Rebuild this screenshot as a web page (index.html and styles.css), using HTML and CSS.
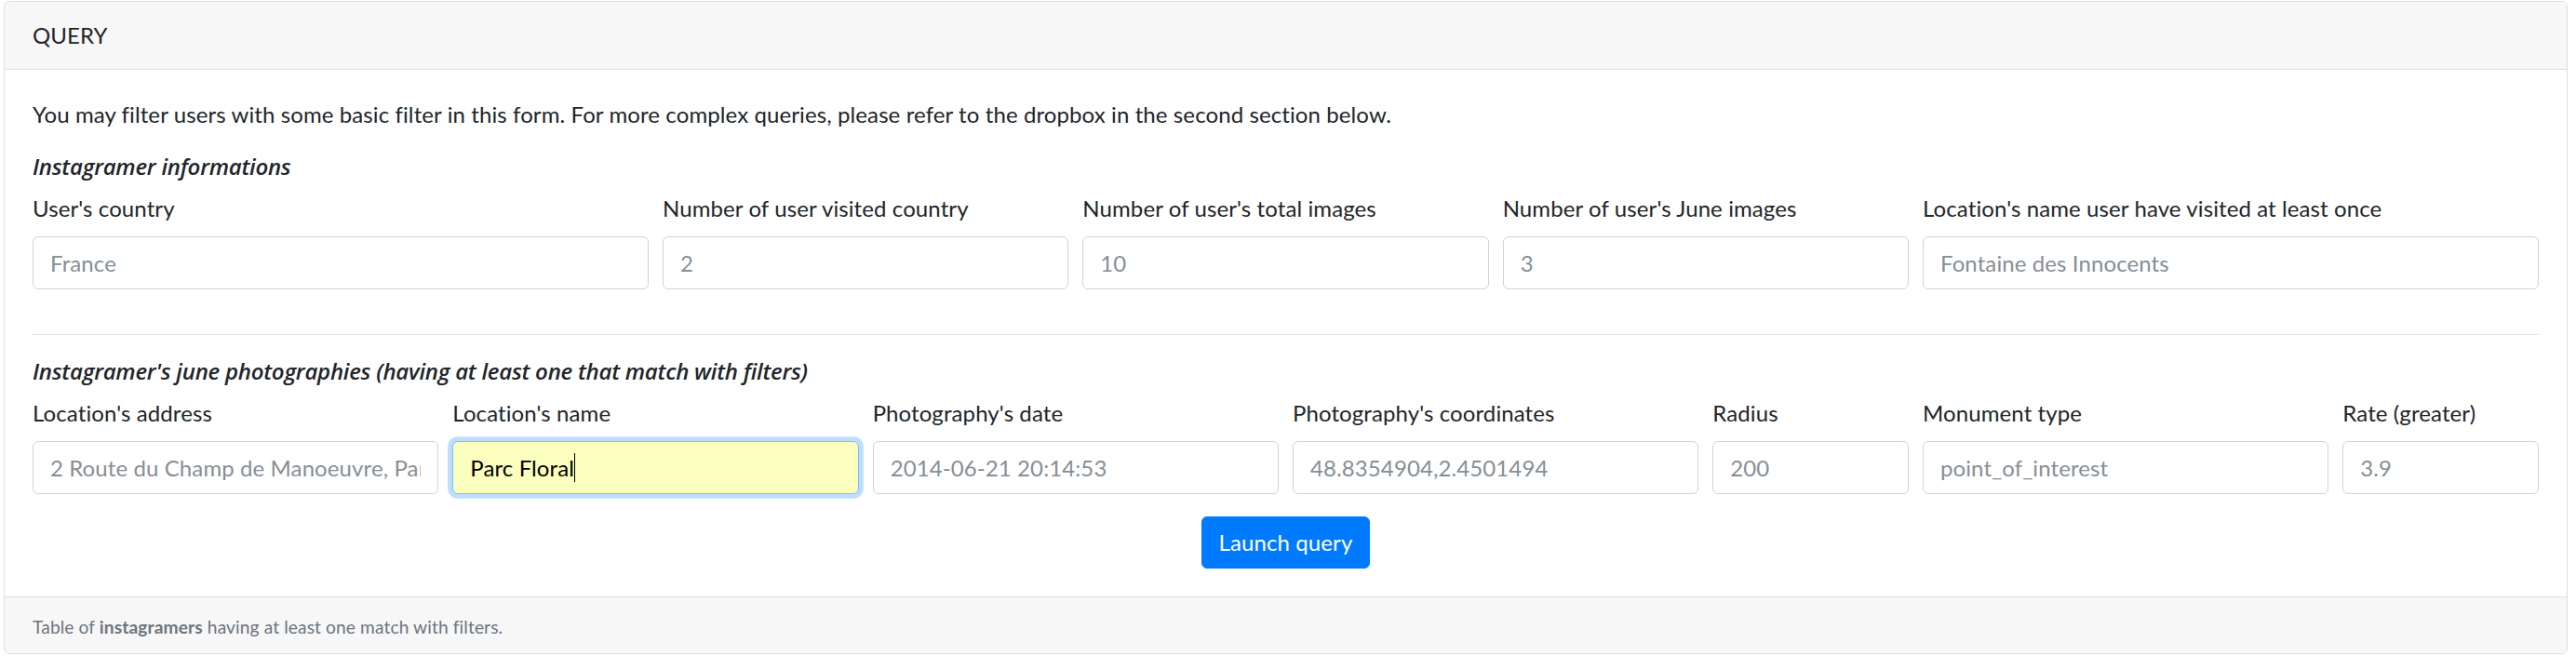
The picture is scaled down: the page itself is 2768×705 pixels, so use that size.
FILE: index.html
```html
<!DOCTYPE html>
<html lang="en">
<head>
<meta charset="utf-8">
<title>Query</title>
<link rel="stylesheet" href="styles.css">
</head>
<body>
<div class="card">
  <div class="card-header">QUERY</div>
  <div class="card-body">
    <p class="intro">You may filter users with some basic filter in this form. For more complex queries, please refer to the dropbox in the second section below.</p>
    <h6 class="section-title">Instagramer informations</h6>
    <div class="form-row">
      <div class="form-group col-3">
        <label>User's country</label>
        <input class="form-control" type="text" placeholder="France">
      </div>
      <div class="form-group col-2">
        <label>Number of user visited country</label>
        <input class="form-control" type="text" placeholder="2">
      </div>
      <div class="form-group col-2">
        <label>Number of user's total images</label>
        <input class="form-control" type="text" placeholder="10">
      </div>
      <div class="form-group col-2">
        <label>Number of user's June images</label>
        <input class="form-control" type="text" placeholder="3">
      </div>
      <div class="form-group col-3">
        <label>Location's name user have visited at least once</label>
        <input class="form-control" type="text" placeholder="Fontaine des Innocents">
      </div>
    </div>
    <hr class="divider">
    <h6 class="section-title">Instagramer's june photographies (having at least one that match with filters)</h6>
    <div class="form-row">
      <div class="form-group col-2">
        <label>Location's address</label>
        <input class="form-control" type="text" placeholder="2 Route du Champ de Manoeuvre, Paris">
      </div>
      <div class="form-group col-2">
        <label>Location's name</label>
        <div class="field-focus">
          <input class="form-control autofill" type="text" value="Parc Floral">
          <span class="caret-mirror" aria-hidden="true">Parc Floral</span>
        </div>
      </div>
      <div class="form-group col-2">
        <label>Photography's date</label>
        <input class="form-control" type="text" placeholder="2014-06-21 20:14:53">
      </div>
      <div class="form-group col-2">
        <label>Photography's coordinates</label>
        <input class="form-control" type="text" placeholder="48.8354904,2.4501494">
      </div>
      <div class="form-group col-1">
        <label>Radius</label>
        <input class="form-control" type="text" placeholder="200">
      </div>
      <div class="form-group col-2">
        <label>Monument type</label>
        <input class="form-control" type="text" placeholder="point_of_interest">
      </div>
      <div class="form-group col-1">
        <label>Rate (greater)</label>
        <input class="form-control" type="text" placeholder="3.9">
      </div>
    </div>
    <div class="actions">
      <button class="btn-primary" type="button">Launch query</button>
    </div>
  </div>
  <div class="card-footer">Table of <b>instagramers</b> having at least one match with filters.</div>
</div>
</body>
</html>
```

FILE: styles.css
```css
html, body {
  margin: 0;
  padding: 0;
  background: #fff;
}
body {
  font-family: "Segoe UI", Lato, "Liberation Sans", sans-serif;
  font-size: 24px;
  line-height: 36px;
  letter-spacing: 0.1px;
  color: #212529;
}
.card {
  margin: 1px 9px 0 4px;
  border: 1px solid #dfdfdf;
  border-radius: 6px;
  background: #fff;
  overflow: hidden;
}
.card-header {
  padding: 18px 30px;
  background: #f7f7f7;
  border-bottom: 1px solid #dfdfdf;
}
.card-body {
  padding: 30px 30px;
}
.intro {
  margin: 0 0 24px;
}
.section-title {
  margin: 0 0 12px;
  font-family: "Open Sans", "Segoe UI", Lato, sans-serif;
  font-size: 24px;
  line-height: 28.8px;
  font-weight: 600;
  font-style: italic;
  letter-spacing: -0.25px;
}
.form-row {
  display: grid;
  grid-template-columns: repeat(12, 1fr);
  column-gap: 15px;
}
.col-1 { grid-column: span 1; }
.col-2 { grid-column: span 2; }
.col-3 { grid-column: span 3; }
.form-group {
  margin-bottom: 24px;
  min-width: 0;
  display: flex;
  flex-direction: column;
}
.form-group label {
  display: block;
  margin-bottom: 12px;
  white-space: nowrap;
}
.form-control {
  box-sizing: border-box;
  width: 100%;
  height: 57px;
  margin: 0;
  padding: 9px 18px;
  font-family: inherit;
  font-size: 24px;
  line-height: 36px;
  letter-spacing: inherit;
  color: #495057;
  background: #fff;
  border: 1.5px solid #ced4da;
  border-radius: 6px;
  outline: none;
}
.form-control::placeholder {
  color: #868e96;
  opacity: 1;
}
.field-focus {
  position: relative;
}
.form-control.autofill {
  background: #faffbd;
  color: #000;
  border-color: #80bdff;
  box-shadow: 0 0 0 4.8px rgba(0, 123, 255, 0.25);
}
.caret-mirror {
  position: absolute;
  top: 13px;
  left: 19px;
  height: 31px;
  line-height: 31px;
  font-size: 24px;
  white-space: pre;
  color: transparent;
  border-right: 1px solid #000;
  pointer-events: none;
}
.divider {
  margin: 24px 0 25px;
  border: 0;
  border-top: 1px solid #e6e6e6;
  height: 0;
}
.actions {
  display: flex;
  justify-content: center;
}
.btn-primary {
  font-family: inherit;
  font-size: 24px;
  line-height: 36px;
  letter-spacing: inherit;
  padding: 9px 18px;
  color: #fff;
  background: #007bff;
  border: 1.5px solid #007bff;
  border-radius: 6px;
  cursor: pointer;
}
.card-footer {
  padding: 18px 30px 14px;
  background: #f7f7f7;
  border-top: 1px solid #dfdfdf;
  font-size: 19.2px;
  line-height: 28.8px;
  color: #6c757d;
}
.card-footer b {
  font-weight: 700;
}
```
